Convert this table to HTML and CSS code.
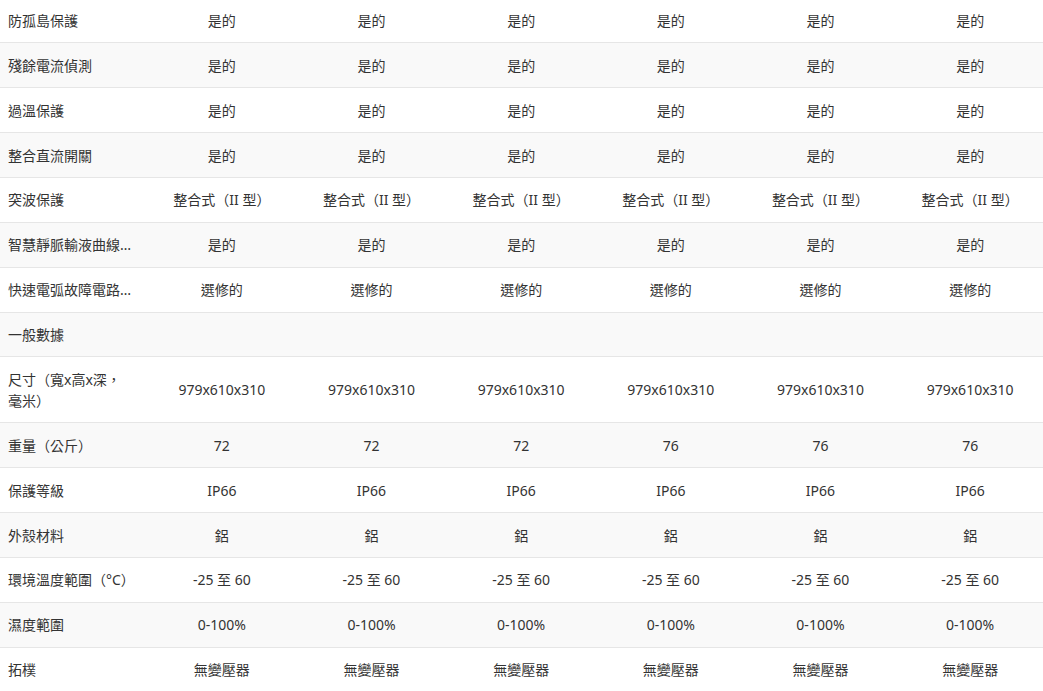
FILE: index.html
```html
<!DOCTYPE html>
<html lang="zh-Hant">
<head>
<meta charset="utf-8">
<title>規格</title>
<link rel="stylesheet" href="styles.css">
</head>
<body>
<table class="spec">
<colgroup>
<col class="c-label"><col><col><col><col><col><col>
</colgroup>
<tbody>
<tr><td class="label">防孤島保護</td><td>是的</td><td>是的</td><td>是的</td><td>是的</td><td>是的</td><td>是的</td></tr>
<tr><td class="label">殘餘電流偵測</td><td>是的</td><td>是的</td><td>是的</td><td>是的</td><td>是的</td><td>是的</td></tr>
<tr><td class="label">過溫保護</td><td>是的</td><td>是的</td><td>是的</td><td>是的</td><td>是的</td><td>是的</td></tr>
<tr><td class="label">整合直流開關</td><td>是的</td><td>是的</td><td>是的</td><td>是的</td><td>是的</td><td>是的</td></tr>
<tr><td class="label">突波保護</td><td>整合式（II 型）</td><td>整合式（II 型）</td><td>整合式（II 型）</td><td>整合式（II 型）</td><td>整合式（II 型）</td><td>整合式（II 型）</td></tr>
<tr><td class="label nowrap">智慧靜脈輸液曲線…</td><td>是的</td><td>是的</td><td>是的</td><td>是的</td><td>是的</td><td>是的</td></tr>
<tr><td class="label nowrap">快速電弧故障電路…</td><td>選修的</td><td>選修的</td><td>選修的</td><td>選修的</td><td>選修的</td><td>選修的</td></tr>
<tr><td class="label">一般數據</td><td></td><td></td><td></td><td></td><td></td><td></td></tr>
<tr class="tall"><td class="label">尺寸（寬x高x深，毫米）</td><td>979x610x310</td><td>979x610x310</td><td>979x610x310</td><td>979x610x310</td><td>979x610x310</td><td>979x610x310</td></tr>
<tr><td class="label">重量（公斤）</td><td>72</td><td>72</td><td>72</td><td>76</td><td>76</td><td>76</td></tr>
<tr><td class="label">保護等級</td><td>IP66</td><td>IP66</td><td>IP66</td><td>IP66</td><td>IP66</td><td>IP66</td></tr>
<tr><td class="label">外殼材料</td><td>鋁</td><td>鋁</td><td>鋁</td><td>鋁</td><td>鋁</td><td>鋁</td></tr>
<tr><td class="label nowrap">環境溫度範圍（°C）</td><td>-25 至 60</td><td>-25 至 60</td><td>-25 至 60</td><td>-25 至 60</td><td>-25 至 60</td><td>-25 至 60</td></tr>
<tr><td class="label">濕度範圍</td><td>0-100%</td><td>0-100%</td><td>0-100%</td><td>0-100%</td><td>0-100%</td><td>0-100%</td></tr>
<tr><td class="label">拓樸</td><td>無變壓器</td><td>無變壓器</td><td>無變壓器</td><td>無變壓器</td><td>無變壓器</td><td>無變壓器</td></tr>
</tbody>
</table>
</body>
</html>
```

FILE: styles.css
```css
html, body {
  margin: 0;
  padding: 0;
  background: #ffffff;
}
body {
  font-family: "Noto Sans", "Noto Sans CJK TC", sans-serif;
  font-size: 14px;
  color: #333333;
  overflow: hidden;
}
.spec {
  width: 1045px;
  margin-top: -2px;
  border-collapse: collapse;
  table-layout: fixed;
}
.c-label {
  width: 147px;
}
.spec tr {
  height: 44.86px;
}
.spec tr.tall {
  height: 66px;
}
.spec td {
  padding: 0 8px;
  line-height: 21px;
  text-align: center;
  vertical-align: middle;
  border-bottom: 1px solid #e6e6e6;
}
.spec tr:nth-child(even) td {
  background: #f9f9f9;
}
.spec td.label {
  text-align: left;
  padding-left: 8px;
  padding-right: 24px;
}
.spec td.nowrap {
  white-space: nowrap;
}
```
